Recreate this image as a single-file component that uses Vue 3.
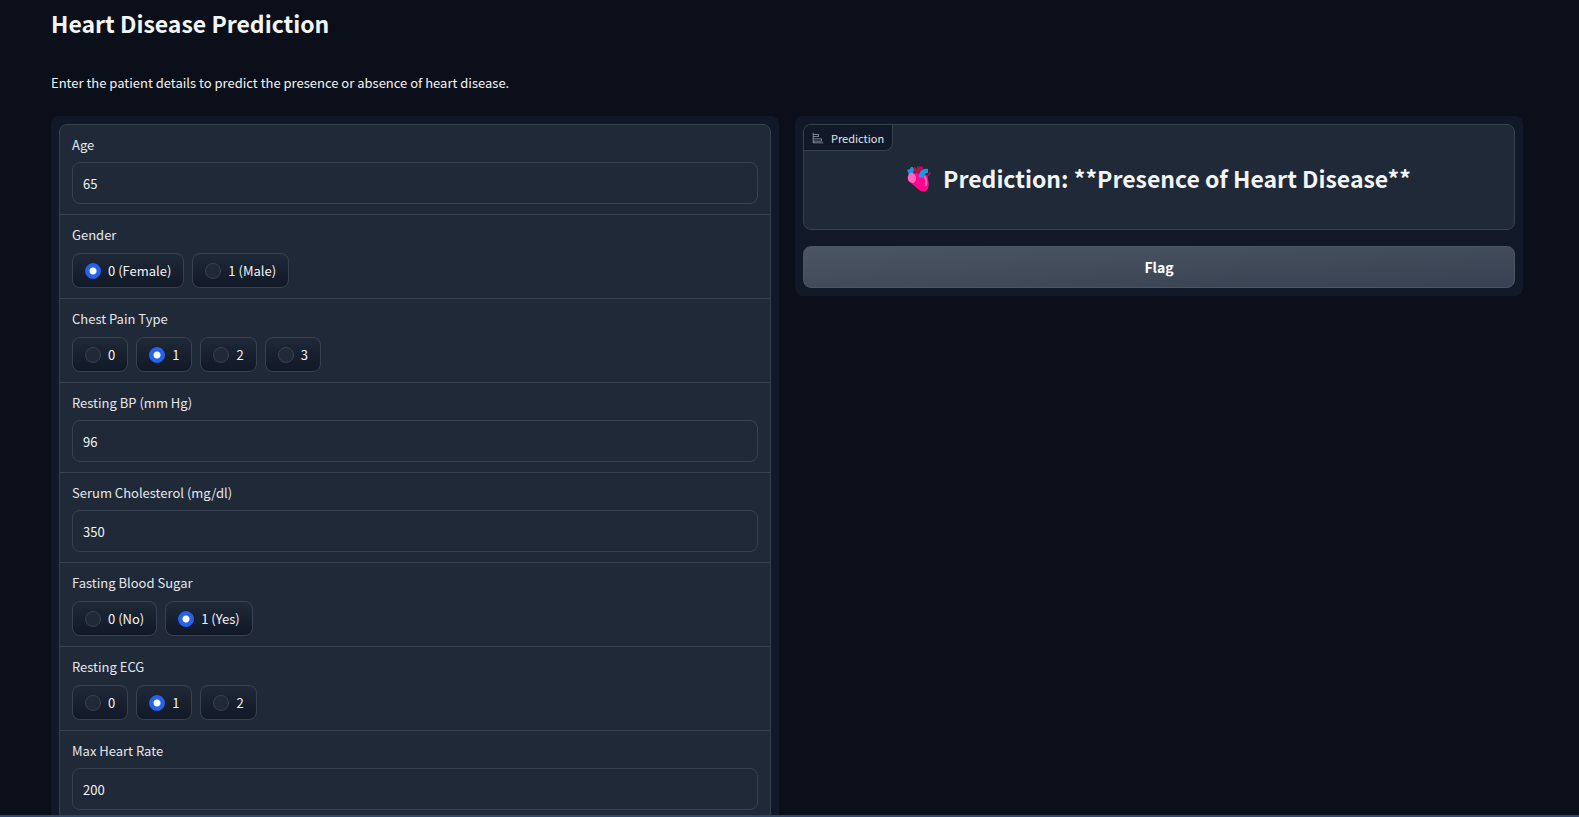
<script setup>
import { reactive } from 'vue'

const fields = reactive([
  { id: 'age', label: 'Age', value: 65 },
  { id: 'gender', label: 'Gender', value: '0 (Female)', options: ['0 (Female)', '1 (Male)'] },
  { id: 'chest-pain', label: 'Chest Pain Type', value: '1', options: ['0', '1', '2', '3'] },
  { id: 'resting-bp', label: 'Resting BP (mm Hg)', value: 96 },
  { id: 'cholesterol', label: 'Serum Cholesterol (mg/dl)', value: 350 },
  { id: 'blood-sugar', label: 'Fasting Blood Sugar', value: '1 (Yes)', options: ['0 (No)', '1 (Yes)'] },
  { id: 'resting-ecg', label: 'Resting ECG', value: '1', options: ['0', '1', '2'] },
  { id: 'max-heart-rate', label: 'Max Heart Rate', value: 200 },
])
</script>

<template>
  <div class="page">
    <main class="container">
      <h1>Heart Disease Prediction</h1>
      <p class="description">Enter the patient details to predict the presence or absence of heart disease.</p>
      <div class="columns">
        <section class="panel">
          <form class="form" @submit.prevent>
            <template v-for="field in fields" :key="field.id">
              <fieldset v-if="field.options" class="block" :aria-labelledby="field.id">
                <span :id="field.id" class="label">{{ field.label }}</span>
                <div class="options">
                  <label v-for="option in field.options" :key="option" class="chip">
                    <input v-model="field.value" type="radio" :name="field.id" :value="option" />
                    <span>{{ option }}</span>
                  </label>
                </div>
              </fieldset>
              <div v-else class="block">
                <label class="label" :for="field.id">{{ field.label }}</label>
                <input :id="field.id" v-model="field.value" class="number" type="number" />
              </div>
            </template>
          </form>
        </section>

        <section class="panel">
          <div class="output">
            <div class="tag">
              <svg width="12" height="12" viewBox="0 0 32 32" aria-hidden="true">
                <path
                  fill="currentColor"
                  d="M4 2H2v26a2 2 0 0 0 2 2h26v-2H4v-3h22v-8H4v-4h14V5H4Zm20 17v4H4v-4ZM16 7v4H4V7Z"
                />
              </svg>
              <span>Prediction</span>
            </div>
            <h2>
              <svg class="heart" width="24" height="27" viewBox="0 0 24 27" aria-hidden="true">
                <path fill="#b90d4b" d="M8 10 7 5 6 3l2-1 2 2V1l2 1 1-2 1 2 2-1v3l2 1-1 4 4 1 1-3 2 1-1 2-2 1-1 3-6 1-5-1Z" />
                <path fill="#ff078f" d="M4 10c4-3 8-2 11 1 3-2 6-1 6 3 1 4 1 9-1 11-2 2-5 2-8 0l-8-7Z" />
                <path fill="#1799e5" d="M12 12c0-5 3-9 9-8v4c-2 0-3 0-3 2-1 3-4 4-6 2Z" />
                <path fill="#1799e5" d="M0 5 3 4l1-2h2l1 3-1 4-4 1-1-3Z" />
                <path fill="#ff63c3" d="M1 11c1-4 5-4 7-1s1 7-2 8c-4 0-6-3-5-7Z" />
                <path fill="none" stroke="#ff63c3" stroke-width="2" stroke-linecap="round" d="M18 12q2 4 1 8" />
              </svg>
              <span>Prediction: **Presence of Heart Disease**</span>
            </h2>
          </div>
          <button type="button" class="flag">Flag</button>
        </section>
      </div>
    </main>
    <div class="edge"></div>
  </div>
</template>

<style>
body {
  margin: 0;
  background: #0b0f19;
}
</style>

<style scoped>
.page {
  box-sizing: border-box;
  height: 100vh;
  overflow: hidden auto;
  scrollbar-width: none;
  background: #0b0f19;
  color: #f3f4f6;
  color-scheme: dark;
  font-family: "Noto Sans CJK SC", "Open Sans", sans-serif;
  font-size: 13px;
  line-height: 20px;
}
.container {
  padding: 7px 56px 24px 51px;
}
h1,
h2,
p {
  margin: 0;
}
h1 {
  font-size: 23px;
  line-height: 32px;
  font-weight: 600;
}
.description {
  margin: 34px 0 23px;
}
.columns {
  display: grid;
  grid-template-columns: 1fr 1fr;
  align-items: start;
  gap: 16px;
}
.panel {
  display: flex;
  flex-direction: column;
  gap: 16px;
  min-width: 0;
  padding: 8px;
  border-radius: 8px;
  background: #111827;
}
.form {
  display: flex;
  flex-direction: column;
  gap: 1px;
  overflow: hidden;
  border: 1px solid #374151;
  border-radius: 8px;
  background: #374151;
}
.block {
  display: flex;
  flex-direction: column;
  gap: 8px;
  min-width: 0;
  margin: 0;
  padding: 10px 12px;
  border: 0;
  background: #1f2937;
}
fieldset.block {
  gap: 9px;
}
.label {
  line-height: 19px;
  color: #e5e7eb;
}
.number {
  box-sizing: border-box;
  width: 100%;
  height: 42px;
  margin: 0;
  padding: 0 10px;
  border: 1px solid #374151;
  border-radius: 8px;
  background: #1f2937;
  color: #f3f4f6;
  font: inherit;
  appearance: textfield;
}
.options {
  display: flex;
  flex-wrap: wrap;
  gap: 8px;
}
.chip {
  box-sizing: border-box;
  display: flex;
  align-items: center;
  gap: 7px;
  height: 35px;
  padding: 0 12px;
  border: 1px solid #374151;
  border-radius: 8px;
  background: linear-gradient(to bottom, #1f2937, #111827);
  cursor: pointer;
}
.chip input {
  box-sizing: border-box;
  width: 16px;
  height: 16px;
  margin: 0;
  border: 1px solid #374151;
  border-radius: 50%;
  background: #1f2937;
  appearance: none;
}
.chip input:checked {
  border-color: #2563eb;
  background: radial-gradient(circle, #ffffff 3px, #2563eb 4px);
}
.output {
  display: flex;
  flex-direction: column;
  align-items: flex-start;
  min-height: 104px;
  overflow: hidden;
  border: 1px solid #374151;
  border-radius: 8px;
  background: #1f2937;
}
.tag {
  display: flex;
  align-items: center;
  gap: 7px;
  height: 25px;
  padding: 0 8px;
  border: solid #374151;
  border-width: 0 1px 1px 0;
  border-radius: 0 0 8px 0;
  background: #111827;
  color: #e5e7eb;
  font-size: 11px;
}
.tag svg {
  color: #9ca3af;
}
h2 {
  display: flex;
  align-items: center;
  align-self: stretch;
  justify-content: center;
  gap: 12px;
  padding-top: 11px;
  font-size: 23px;
  line-height: 32px;
  font-weight: 600;
}
.flag {
  height: 42px;
  border: 1px solid #4b5563;
  border-radius: 8px;
  background: linear-gradient(to bottom right, #4b5563, #374151);
  color: #ffffff;
  font-family: inherit;
  font-size: 14px;
  font-weight: 600;
  cursor: pointer;
}
.edge {
  position: fixed;
  inset: auto 0 0;
  height: 2px;
  background: #2f4a70;
}
</style>
